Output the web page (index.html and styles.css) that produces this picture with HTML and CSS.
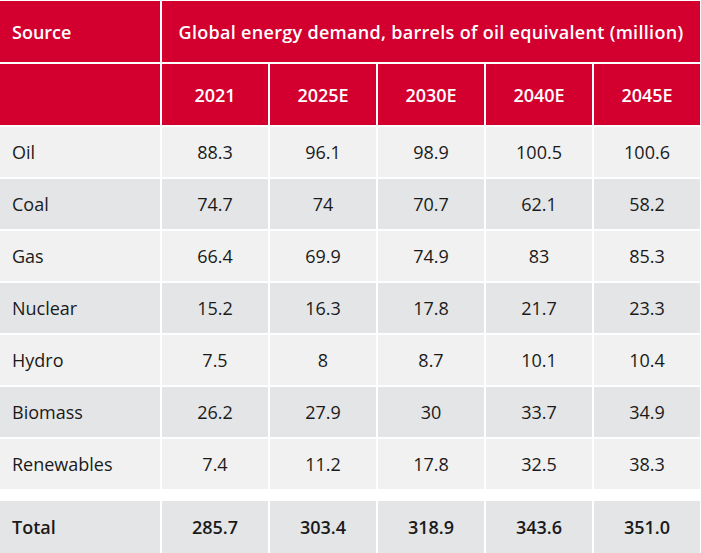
FILE: index.html
```html
<!DOCTYPE html>
<html lang="en">
<head>
<meta charset="utf-8">
<title>Global energy demand</title>
<link rel="stylesheet" href="styles.css">
</head>
<body>
<table class="energy">
  <colgroup>
    <col class="c-src">
    <col class="c-yr"><col class="c-yr"><col class="c-yr"><col class="c-yr"><col class="c-yr">
  </colgroup>
  <thead>
    <tr class="h1">
      <th class="lbl">Source</th>
      <th class="title" colspan="5">Global energy demand, barrels of oil equivalent (million)</th>
    </tr>
    <tr class="h2">
      <th class="lbl"></th>
      <th>2021</th><th>2025E</th><th>2030E</th><th>2040E</th><th>2045E</th>
    </tr>
  </thead>
  <tbody>
    <tr class="odd"><td class="lbl">Oil</td><td>88.3</td><td>96.1</td><td>98.9</td><td>100.5</td><td>100.6</td></tr>
    <tr class="even"><td class="lbl">Coal</td><td>74.7</td><td>74</td><td>70.7</td><td>62.1</td><td>58.2</td></tr>
    <tr class="odd"><td class="lbl">Gas</td><td>66.4</td><td>69.9</td><td>74.9</td><td>83</td><td>85.3</td></tr>
    <tr class="even"><td class="lbl">Nuclear</td><td>15.2</td><td>16.3</td><td>17.8</td><td>21.7</td><td>23.3</td></tr>
    <tr class="odd"><td class="lbl">Hydro</td><td>7.5</td><td>8</td><td>8.7</td><td>10.1</td><td>10.4</td></tr>
    <tr class="even"><td class="lbl">Biomass</td><td>26.2</td><td>27.9</td><td>30</td><td>33.7</td><td>34.9</td></tr>
    <tr class="odd"><td class="lbl">Renewables</td><td>7.4</td><td>11.2</td><td>17.8</td><td>32.5</td><td>38.3</td></tr>
  </tbody>
  <tfoot>
    <tr class="total"><td class="lbl">Total</td><td>285.7</td><td>303.4</td><td>318.9</td><td>343.6</td><td>351.0</td></tr>
  </tfoot>
</table>
</body>
</html>
```
FILE: styles.css
```css
html, body {
  margin: 0;
  padding: 0;
  background: #ffffff;
}
body {
  padding-top: 1px;
  font-family: "Open Sans", "Noto Sans", sans-serif;
}
.energy {
  border-collapse: separate;
  border-spacing: 0;
  table-layout: fixed;
  width: 702px;
  font-size: 18px;
  color: #1a1a1a;
}
.c-src { width: 162px; }
.c-yr { width: 108px; }
.energy th,
.energy td {
  border-right: 2px solid #ffffff;
  border-bottom: 2px solid #ffffff;
  padding: 0;
  text-align: center;
  vertical-align: middle;
  line-height: 24px;
}
.energy th {
  background: #d3002f;
  color: #ffffff;
  font-weight: 600;
}
.energy .title {
  letter-spacing: 0.3px;
}
.energy .lbl {
  text-align: left;
  padding-left: 12px;
}
.h1 th { height: 61px; }
.h2 th { height: 61px; }
tbody td { height: 50px; padding-bottom: 2px; }
tbody .odd td { background: #f0f1f0; }
tbody .even td { background: #e4e5e7; }
.total td {
  height: 52px;
  border-top: 10px solid #ffffff;
  background: #e4e5e7;
  font-weight: 600;
}
```
